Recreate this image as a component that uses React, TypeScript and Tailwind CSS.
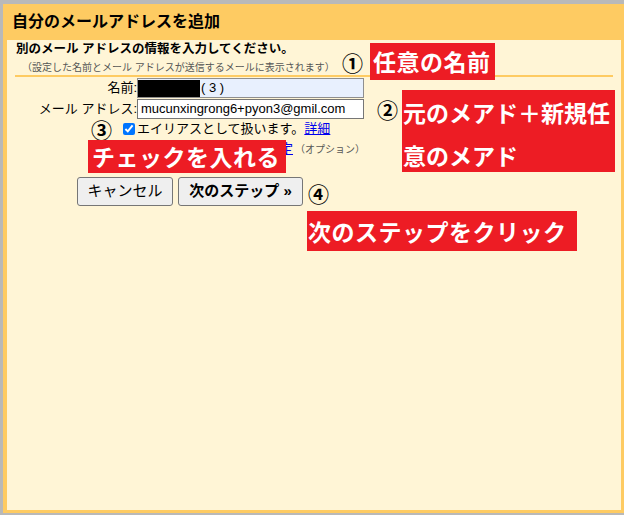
export default function App() {
  const jp = "font-['Liberation_Sans','Noto_Sans_CJK_JP',sans-serif]";
  const redBox = "absolute bg-[#ed1c24] text-white font-bold text-[23px] tracking-[0.5px] whitespace-nowrap font-['Noto_Sans_CJK_JP',sans-serif]";
  const circled = "absolute text-[21px] leading-[24px] font-bold text-black font-['Noto_Sans_CJK_JP',sans-serif]";

  return (
    <div className={`relative w-[624px] h-[515px] bg-[#b9b9b9] pt-[4px] pl-[3px] pb-[2px] text-black ${jp}`}>
      <div className="flex flex-col h-full bg-[#fecb62] pl-[4px] pr-[3px] pb-[3px]">
        <div className="h-[36px] flex items-center pl-[5px] text-[16px] font-bold">自分のメールアドレスを追加</div>

        <div className="flex-1 flex flex-col bg-[#fff5d6]">
          <div className="h-[18px] leading-[18px] pl-[9px] text-[12.5px] font-bold">
            別のメール アドレスの情報を入力してください。
          </div>
          <div className="mt-[3px] h-[13px] leading-[13px] pl-[15px] text-[10px] text-[#555]">
            （設定した名前とメール アドレスが送信するメールに表示されます）
          </div>
          <div className="mt-[1px] ml-[8px] mr-[8px] h-[2px] bg-[#fecb62]" />

          <div className="grid grid-cols-[130px_227px] mt-[1px] text-[13px]">
            <div className="h-[20px] flex items-center justify-end">名前:</div>
            <div className="h-[20px] flex items-center border border-[#8f8f8f] bg-[#e8f0fe]">
              <span className="w-[62px] h-[17px] bg-black" />
              <span className="ml-[1px]">( 3 )</span>
            </div>

            <div className="mt-[1px] h-[20px] flex items-center justify-end">メール アドレス:</div>
            <div className="mt-[1px] h-[20px] flex items-center pl-[3px] border border-[#767676] bg-white">
              mucunxingrong6+pyon3@gmil.com
            </div>

            <div className="h-[20px] flex items-center justify-end pr-[2px]">
              <input type="checkbox" defaultChecked className="w-[12px] h-[12px] accent-[#0075ff]" />
            </div>
            <div className="h-[20px] flex items-center whitespace-nowrap">
              エイリアスとして扱います。
              <a className="text-[#0000ee] underline">詳細</a>
            </div>

            <div className="h-[20px]" />
            <div className="h-[20px] flex items-center whitespace-nowrap">
              <a className="text-[#0000ee] underline">別の返信先アドレスを指定</a>
              <span className="ml-[2px] text-[10px] text-[#555]">（オプション）</span>
            </div>
          </div>

          <div className="mt-[18px] pl-[70px] flex gap-[5px]">
            <button className="h-[29px] w-[96px] bg-[#efefef] border border-[#767676] rounded-[3px] text-[15px]">
              キャンセル
            </button>
            <button className="h-[29px] w-[125px] bg-[#efefef] border border-[#767676] rounded-[3px] text-[15px] font-bold">
              次のステップ »
            </button>
          </div>
        </div>
      </div>

      <div className={`${circled} left-[342px] top-[50px]`}>①</div>
      <div className={`${redBox} left-[370px] top-[43px] w-[125px] h-[37px] leading-[37px] pl-[3px]`}>任意の名前</div>

      <div className={`${circled} left-[377px] top-[97px]`}>②</div>
      <div className={`${redBox} left-[402px] top-[90px] w-[213px] h-[82px] pt-[1px] leading-[43px] pl-[1px] tracking-normal`}>
        元のメアド＋新規任
        <br />
        意のメアド
      </div>

      <div className={`${circled} left-[91px] top-[117px]`}>③</div>
      <div className={`${redBox} left-[88px] top-[140px] w-[198px] h-[33px] leading-[33px] pl-[4px]`}>チェックを入れる</div>

      <div className={`${circled} left-[308px] top-[181px]`}>④</div>
      <div className={`${redBox} left-[307px] top-[211px] w-[270px] h-[40px] leading-[40px] pl-[1px]`}>次のステップをクリック</div>
    </div>
  );
}
